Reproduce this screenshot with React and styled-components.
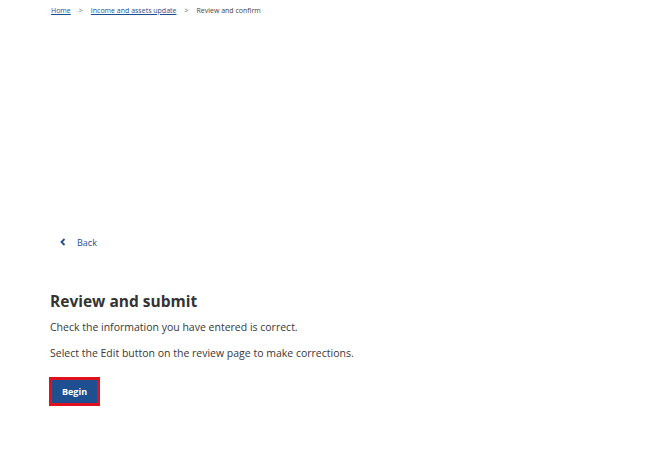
import React from "react";
import styled, { createGlobalStyle } from "styled-components";

const Global = createGlobalStyle`
  html, body { margin: 0; padding: 0; background: #fff; }
  body { font-family: "Open Sans", "Noto Sans", sans-serif; color: #333; }
`;

const Page = styled.div`
  width: 650px;
  height: 451px;
  box-sizing: border-box;
  padding: 6px 0 0 51px;
  display: flex;
  flex-direction: column;
`;

const Crumbs = styled.nav`
  display: flex;
  align-items: center;
  gap: 8px;
  font-size: 7px;
  line-height: 10px;
  color: #444;
`;

const CrumbLink = styled.a`
  color: #1d4f91;
  text-decoration: underline;
`;

const Sep = styled.span`
  color: #666;
`;

const BackLink = styled.a`
  margin-top: 220px;
  margin-left: 9px;
  display: flex;
  align-items: center;
  gap: 11px;
  font-size: 9px;
  color: #1d4f91;
  text-decoration: none;
  height: 12px;
`;

const Heading = styled.h1`
  margin: 42px 0 0 -1px;
  font-size: 15.5px;
  line-height: 22px;
  font-weight: 700;
  color: #333;
`;

const Para = styled.p`
  margin: ${(p) => p.$top}px 0 0 -1px;
  font-size: 10.5px;
  line-height: 14px;
  color: #383838;
`;

const BeginButton = styled.button`
  margin: 17px 0 0 -2px;
  align-self: flex-start;
  width: 51px;
  height: 29px;
  border: 3px solid #e0101f;
  background: #1d4f91;
  color: #fff;
  font-family: inherit;
  font-size: 9px;
  font-weight: 700;
  padding: 0;
  cursor: pointer;
`;

export default function App() {
  return (
    <>
      <Global />
      <Page>
        <Crumbs>
          <CrumbLink href="#">Home</CrumbLink>
          <Sep>&gt;</Sep>
          <CrumbLink href="#">Income and assets update</CrumbLink>
          <Sep>&gt;</Sep>
          <span>Review and confirm</span>
        </Crumbs>
        <BackLink href="#">
          <svg width="6" height="8" viewBox="0 0 6 8">
            <path d="M4.5 1 L1.5 4 L4.5 7" fill="none" stroke="#1d4f91" strokeWidth="1.8" />
          </svg>
          Back
        </BackLink>
        <Heading>Review and submit</Heading>
        <Para $top={8}>Check the information you have entered is correct.</Para>
        <Para $top={12}>Select the Edit button on the review page to make corrections.</Para>
        <BeginButton>Begin</BeginButton>
      </Page>
    </>
  );
}
